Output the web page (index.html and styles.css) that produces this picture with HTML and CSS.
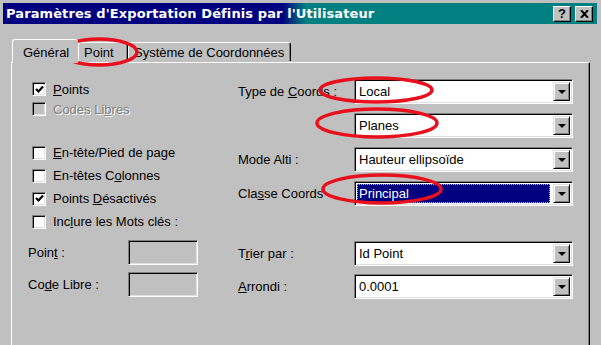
FILE: index.html
```html
<!DOCTYPE html>
<html>
<head>
  <title>Paramètres d'Exportation</title>
  <link rel="stylesheet" href="styles.css">
</head>
<body>
  <div class="dialog">
    <div class="titlebar">
      <span class="title">Paramètres d'Exportation Définis par l'Utilisateur</span>
      <div class="title-buttons">
        <div class="tbtn">?</div>
        <div class="tbtn">
          <svg width="9" height="8" viewBox="0 0 9 8"><path d="M1 0 L8 8 M8 0 L1 8" stroke="#000" stroke-width="2"/></svg>
        </div>
      </div>
    </div>

    <div class="tabs">
      <div class="tab active tab-general">Général</div>
      <div class="tab tab-point">Point</div>
      <div class="tab tab-system">Système de Coordonnées</div>
    </div>

    <div class="panel">
      <div class="col-left">
        <div class="check-row short">
          <span class="box"><svg class="tick" width="9" height="9" viewBox="0 0 9 9"><path d="M1 4 L3.5 6.5 L8 1.5" fill="none" stroke="#000" stroke-width="2.2"/></svg></span>
          <span><u>P</u>oints</span>
        </div>
        <div class="check-row short disabled">
          <span class="box"></span>
          <span>Codes Li<u>b</u>res</span>
        </div>

        <div class="check-group">
          <div class="check-row">
            <span class="box"></span>
            <span><u>E</u>n-tête/Pied de page</span>
          </div>
          <div class="check-row">
            <span class="box"></span>
            <span>En-têtes C<u>o</u>lonnes</span>
          </div>
          <div class="check-row">
            <span class="box"><svg class="tick" width="9" height="9" viewBox="0 0 9 9"><path d="M1 4 L3.5 6.5 L8 1.5" fill="none" stroke="#000" stroke-width="2.2"/></svg></span>
            <span>Points <u>D</u>ésactivés</span>
          </div>
          <div class="check-row">
            <span class="box"></span>
            <span>Inc<u>l</u>ure les Mots clés :</span>
          </div>
        </div>

        <div class="edit-group">
          <div class="edit-row">
            <span class="label">Poin<u>t</u> :</span>
            <span class="edit"></span>
          </div>
          <div class="edit-row">
            <span class="label">Co<u>d</u>e Libre :</span>
            <span class="edit"></span>
          </div>
        </div>
      </div>

      <div class="col-right">
        <div class="field-row">
          <span class="label">Type de <u>C</u>oords :</span>
          <div class="combo"><span class="value">Local</span><span class="arrow"></span></div>
        </div>
        <div class="field-row">
          <span class="label"></span>
          <div class="combo"><span class="value">Planes</span><span class="arrow"></span></div>
        </div>
        <div class="field-row">
          <span class="label">Mode Alti :</span>
          <div class="combo"><span class="value">Hauteur ellipsoïde</span><span class="arrow"></span></div>
        </div>
        <div class="field-row">
          <span class="label">Cla<u>s</u>se Coords</span>
          <div class="combo"><span class="value selected">Principal</span><span class="arrow"></span></div>
        </div>

        <div class="field-group">
          <div class="field-row">
            <span class="label">T<u>r</u>ier par :</span>
            <div class="combo"><span class="value">Id Point</span><span class="arrow"></span></div>
          </div>
          <div class="field-row">
            <span class="label"><u>A</u>rrondi :</span>
            <div class="combo"><span class="value">0.0001</span><span class="arrow"></span></div>
          </div>
        </div>
      </div>
    </div>

    <!-- red marks drawn over the screenshot -->
    <svg class="marks" width="601" height="345" viewBox="0 0 601 345">
      <ellipse cx="99" cy="52" rx="38" ry="13" />
      <ellipse cx="376" cy="90" rx="56" ry="12" />
      <ellipse cx="377" cy="123" rx="60" ry="14" />
      <ellipse cx="382" cy="189" rx="59" ry="14" />
    </svg>
  </div>
</body>
</html>
```

FILE: styles.css
```css
body {
  margin: 0;
  background-color: #c0c0c0;
  font-family: 'Liberation Sans', Arial, sans-serif;
  font-size: 13px;
  color: #000;
}

.dialog {
  position: relative;
  width: 601px;
  height: 345px;
  box-sizing: border-box;
  padding: 3px 4px 0 3px;
  overflow: hidden;
  background-color: #c0c0c0;
}

.titlebar {
  display: flex;
  align-items: center;
  justify-content: space-between;
  height: 21px;
  padding-left: 3px;
  background: linear-gradient(to right, #000080 0%, #000080 47%, #008080 51%, #008080 100%);
}

.title {
  color: #fff;
  font-family: 'DejaVu Sans', Verdana, sans-serif;
  font-weight: bold;
  font-size: 13px;
  letter-spacing: 0.1px;
}

.title-buttons {
  display: flex;
  gap: 4px;
  margin-right: 4px;
}

.tbtn {
  display: flex;
  align-items: center;
  justify-content: center;
  width: 16px;
  height: 14px;
  background-color: #c0c0c0;
  border-top: 1px solid #fff;
  border-left: 1px solid #fff;
  border-right: 1px solid #000;
  border-bottom: 1px solid #000;
  box-shadow: inset -1px -1px #808080;
  font-weight: bold;
  font-size: 13px;
  line-height: 14px;
}

.tabs {
  display: flex;
  align-items: flex-end;
  margin-top: 13px;
  padding-left: 9px;
  height: 25px;
}

.tab {
  height: 18px;
  line-height: 19px;
  box-sizing: content-box;
  border-top: 1px solid #fff;
  border-left: 1px solid #fff;
  border-right: 1px solid #000;
  border-top-left-radius: 3px;
  border-top-right-radius: 3px;
  box-shadow: inset -1px 0 #808080;
  margin-bottom: 1px;
  white-space: nowrap;
}

.tab-general {
  width: 55px;
  padding-left: 10px;
}

.tab-point {
  width: 43px;
  padding-left: 5px;
}

.tab-system {
  width: 156px;
  padding-left: 5px;
}

.tab.active {
  position: relative;
  z-index: 1;
  height: 23px;
  line-height: 25px;
  margin-bottom: -1px;
  background-color: #c0c0c0;
  border-right: none;
  box-shadow: none;
}

.panel {
  display: flex;
  height: 300px;
  margin-left: 8px;
  margin-right: 7px;
  border-top: 1px solid #fff;
  border-left: 1px solid #fff;
  border-right: 1px solid #000;
  box-shadow: inset -1px 0 #808080;
  padding: 16px 0 0 16px;
}

.col-left {
  width: 210px;
  display: flex;
  flex-direction: column;
}

.check-row {
  display: flex;
  align-items: center;
  height: 23px;
  padding-left: 4px;
}

.check-row.short {
  height: 20px;
}

.check-row.disabled {
  color: #808080;
  text-shadow: 1px 1px #fff;
}

.check-row.disabled .box {
  background-color: #c0c0c0;
}

.box {
  display: flex;
  align-items: center;
  justify-content: center;
  width: 10px;
  height: 10px;
  margin-right: 7px;
  background-color: #fff;
  border-top: 1px solid #808080;
  border-left: 1px solid #808080;
  border-right: 1px solid #fff;
  border-bottom: 1px solid #fff;
  box-shadow: inset 1px 1px #000, inset -1px -1px #dfdfdf;
  padding: 1px;
}

.check-group {
  margin-top: 22px;
}

.edit-group {
  margin-top: 7px;
  display: flex;
  flex-direction: column;
  gap: 7px;
}

.edit-row {
  display: flex;
  align-items: center;
}

.edit-row .label {
  width: 100px;
}

.edit {
  width: 68px;
  height: 23px;
  border-top: 1px solid #808080;
  border-left: 1px solid #808080;
  border-right: 1px solid #fff;
  border-bottom: 1px solid #fff;
  box-shadow: inset 1px 1px #000, inset -1px -1px #dfdfdf;
}

.col-right {
  display: flex;
  flex-direction: column;
  gap: 9px;
}

.field-group {
  margin-top: 26px;
  display: flex;
  flex-direction: column;
  gap: 8px;
}

.field-row {
  display: flex;
  align-items: center;
}

.field-row .label {
  width: 116px;
}

.combo {
  display: flex;
  align-items: center;
  width: 213px;
  height: 19px;
  padding: 2px;
  background-color: #fff;
  border-top: 1px solid #808080;
  border-left: 1px solid #808080;
  border-right: 1px solid #fff;
  border-bottom: 1px solid #fff;
  box-shadow: inset 1px 1px #000, inset -1px -1px #dfdfdf;
}

.combo .value {
  flex: 1;
  height: 19px;
  line-height: 19px;
  padding-left: 2px;
  margin-right: 3px;
  box-sizing: border-box;
}

.combo .value.selected {
  background-color: #000080;
  color: #fff;
  outline: 1px dotted #c0c080;
  outline-offset: -1px;
}

.arrow {
  position: relative;
  width: 15px;
  height: 17px;
  background-color: #c0c0c0;
  border-top: 1px solid #dfdfdf;
  border-left: 1px solid #dfdfdf;
  border-right: 1px solid #000;
  border-bottom: 1px solid #000;
  box-shadow: inset 1px 1px #fff, inset -1px -1px #808080;
}

.arrow::after {
  content: '';
  position: absolute;
  left: 4px;
  top: 7px;
  border-left: 4px solid transparent;
  border-right: 4px solid transparent;
  border-top: 4px solid #000;
}

.marks {
  position: absolute;
  left: 0;
  top: 0;
  pointer-events: none;
}

.marks ellipse {
  fill: none;
  stroke: #e8101c;
  stroke-width: 3.5;
}
```
